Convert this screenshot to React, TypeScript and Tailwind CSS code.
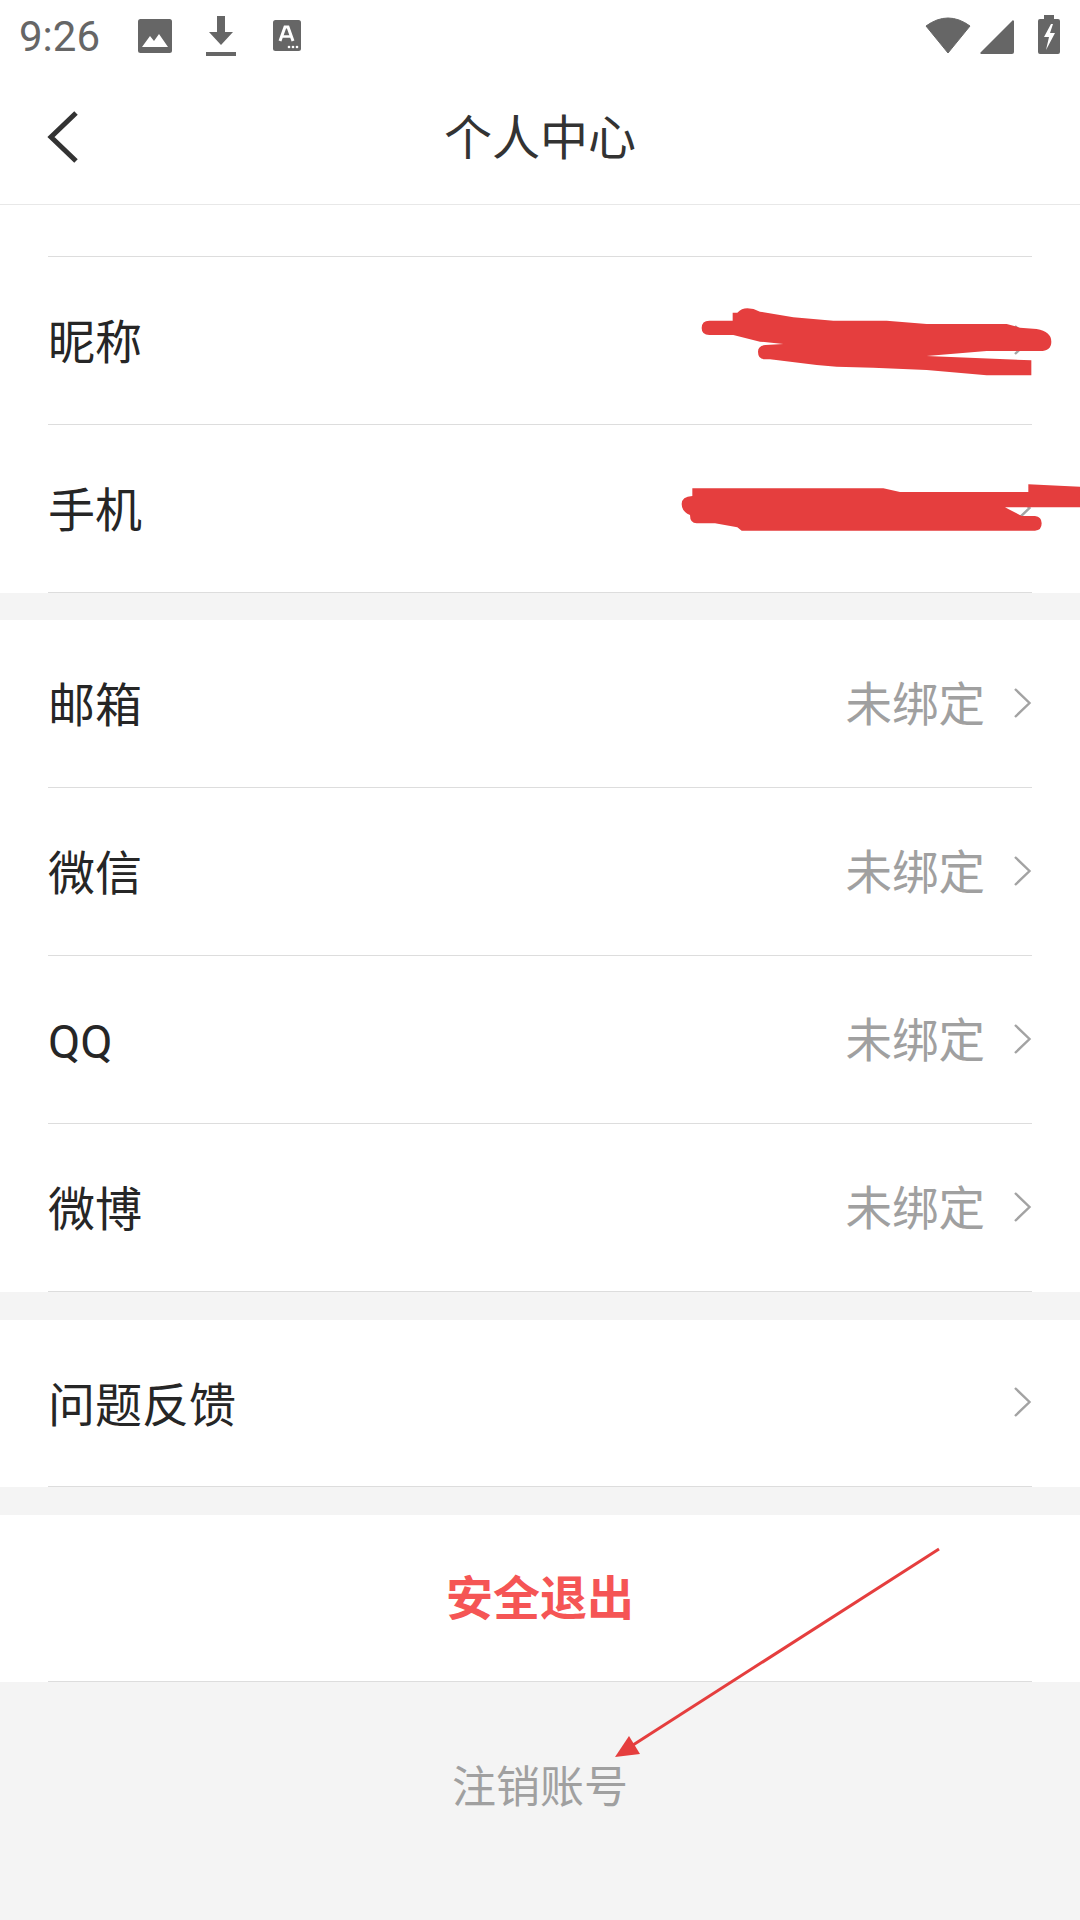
const fontStack = "font-['Roboto','Noto_Sans_CJK_SC',sans-serif]";

function Chevron() {
  return (
    <svg width="19" height="32" viewBox="0 0 19 32" fill="none" className="ml-[28px] mb-[6px] shrink-0">
      <path d="M2 2 16.500 16 2 30" stroke="#a3a3a3" strokeWidth="2.400" />
    </svg>
  );
}

function Row({ label, value, arrow = true, h = "h-[168px]" }: { label: string; value?: string; arrow?: boolean; h?: string }) {
  return (
    <div className={`mx-12 flex ${h} items-center border-b border-[#dddddd] pt-1`}>
      <span className="text-[47px] leading-none text-[#262626]">{label}</span>
      <div className="ml-auto flex items-center">
        {value && <span className="text-[46.500px] leading-none text-[#a0a0a0]">{value}</span>}
        {arrow && <Chevron />}
      </div>
    </div>
  );
}

function StatusBar() {
  return (
    <div className="flex h-[70px] items-start pl-[19px] pr-5 text-[#666666]">
      <span className="mt-[12px] w-[82px] font-['Roboto'] text-[42px] leading-[50px]">9:26</span>
      <svg width="34" height="34" viewBox="0 0 34 34" className="ml-[37px] mt-[19px]">
        <rect width="34" height="34" rx="2.500" fill="#666666" />
        <path d="M4 28 12 17 16 22 21 15 30 28Z" fill="#fff" />
      </svg>
      <svg width="30" height="40" viewBox="0 0 30 40" className="ml-[34px] mt-4">
        <path d="M11 0h8v16h8L15 29 3 16h8Z" fill="#666666" />
        <rect y="36" width="30" height="4" fill="#666666" />
      </svg>
      <svg width="28" height="31" viewBox="0 0 28 31" className="ml-[37px] mt-[20px]">
        <rect width="28" height="31" rx="2.500" fill="#666666" />
        <path d="M7 21 12 7h3l5 14" fill="none" stroke="#fff" strokeWidth="3" />
        <path d="M9.500 16.500h8" stroke="#fff" strokeWidth="2.500" />
        <circle cx="16" cy="27" r="1.300" fill="#fff" />
        <circle cx="20" cy="27" r="1.300" fill="#fff" />
        <circle cx="24" cy="27" r="1.300" fill="#fff" />
      </svg>
      <svg width="46" height="36" viewBox="0 0 46 36" className="ml-auto mt-[17px]">
        <path d="M1 9Q23-7 45 9L23 36Z" fill="#666666" stroke="#666666" strokeLinejoin="round" />
      </svg>
      <svg width="34" height="34" viewBox="0 0 34 34" className="ml-[9px] mt-[20px]">
        <path d="M34 2v30a2 2 0 0 1-2 2H2a1 1 0 0 1-1-2L32 1a1 1 0 0 1 2 1Z" fill="#666666" />
      </svg>
      <svg width="22" height="39" viewBox="0 0 22 39" className="ml-6 mt-[15px]">
        <path d="M6 0h10v4h4a2 2 0 0 1 2 2v31a2 2 0 0 1-2 2H2a2 2 0 0 1-2-2V6a2 2 0 0 1 2-2h4Z" fill="#666666" />
        <path d="M13 9 6 22h5l-3 13 9-17h-5l3-9Z" fill="#fff" />
      </svg>
    </div>
  );
}

export default function App() {
  return (
    <div className={`relative h-[1920px] w-[1080px] overflow-hidden bg-[#f4f4f4] ${fontStack}`}>
      <div className="bg-white">
        <StatusBar />
        <div className="relative flex h-[135px] items-center justify-center border-b border-[#e8e8e8] pt-[3px]">
          <svg width="34" height="54" viewBox="0 0 34 54" fill="none" className="absolute left-[46px] top-[40px]">
            <path d="M30 3 5 27l25 24" stroke="#333333" strokeWidth="5" />
          </svg>
          <span className="text-[48px] leading-none text-[#333333]">个人中心</span>
        </div>
        <div className="mx-12 h-[52px] border-b border-[#dddddd]" />
        <Row label="昵称" />
        <Row label="手机" />
      </div>

      <div className="mt-[27px] bg-white">
        <Row label="邮箱" value="未绑定" />
        <Row label="微信" value="未绑定" />
        <Row label="QQ" value="未绑定" />
        <Row label="微博" value="未绑定" />
      </div>

      <div className="mt-7 bg-white">
        <Row label="问题反馈" h="h-[167px]" />
      </div>

      <div className="mt-7 bg-white">
        <div className="mx-12 flex h-[167px] items-center justify-center border-b border-[#dddddd]">
          <span className="text-[47px] font-bold leading-none text-[#f55555]">安全退出</span>
        </div>
      </div>

      <div className="mt-[84px] text-center text-[44px] leading-[44px] text-[#a0a0a0]">注销账号</div>

      {/* red marks drawn over the screenshot */}
      <svg width="420" height="280" viewBox="0 0 1260 840" className="absolute left-[660px] top-[280px]">
        <path
          fill="#e53e3e"
          d="M148 122H218V98H232Q245 85 262 85 280 85 300 95L400 112 520 122H680L800 132H1040L1080 143 1130 147Q1174 155 1174 185 1174 213 1140 213H980L800 228 1114 241V286H980L800 270 640 263 530 260 470 255 330 238H316Q294 238 294 215 294 197 316 195L370 192 300 185 220 165H148Q125 165 125 144 125 122 148 122Z"
        />
        <path
          fill="#e53e3e"
          d="M97 625H670L720 636H1105V613L1260 620V682H1035L1085 708H1125Q1145 710 1145 730 1145 752 1125 752H245L232 742 165 730H110Q90 730 90 705 65 695 65 672 65 650 97 648Z"
        />
      </svg>
      <svg width="1080" height="1920" viewBox="0 0 1080 1920" className="pointer-events-none absolute left-0 top-0">
        <path d="M939 1549 633 1745" stroke="#e53e3e" strokeWidth="3" />
        <path d="M615 1757 629 1736 640 1754Z" fill="#e53e3e" />
      </svg>
    </div>
  );
}
